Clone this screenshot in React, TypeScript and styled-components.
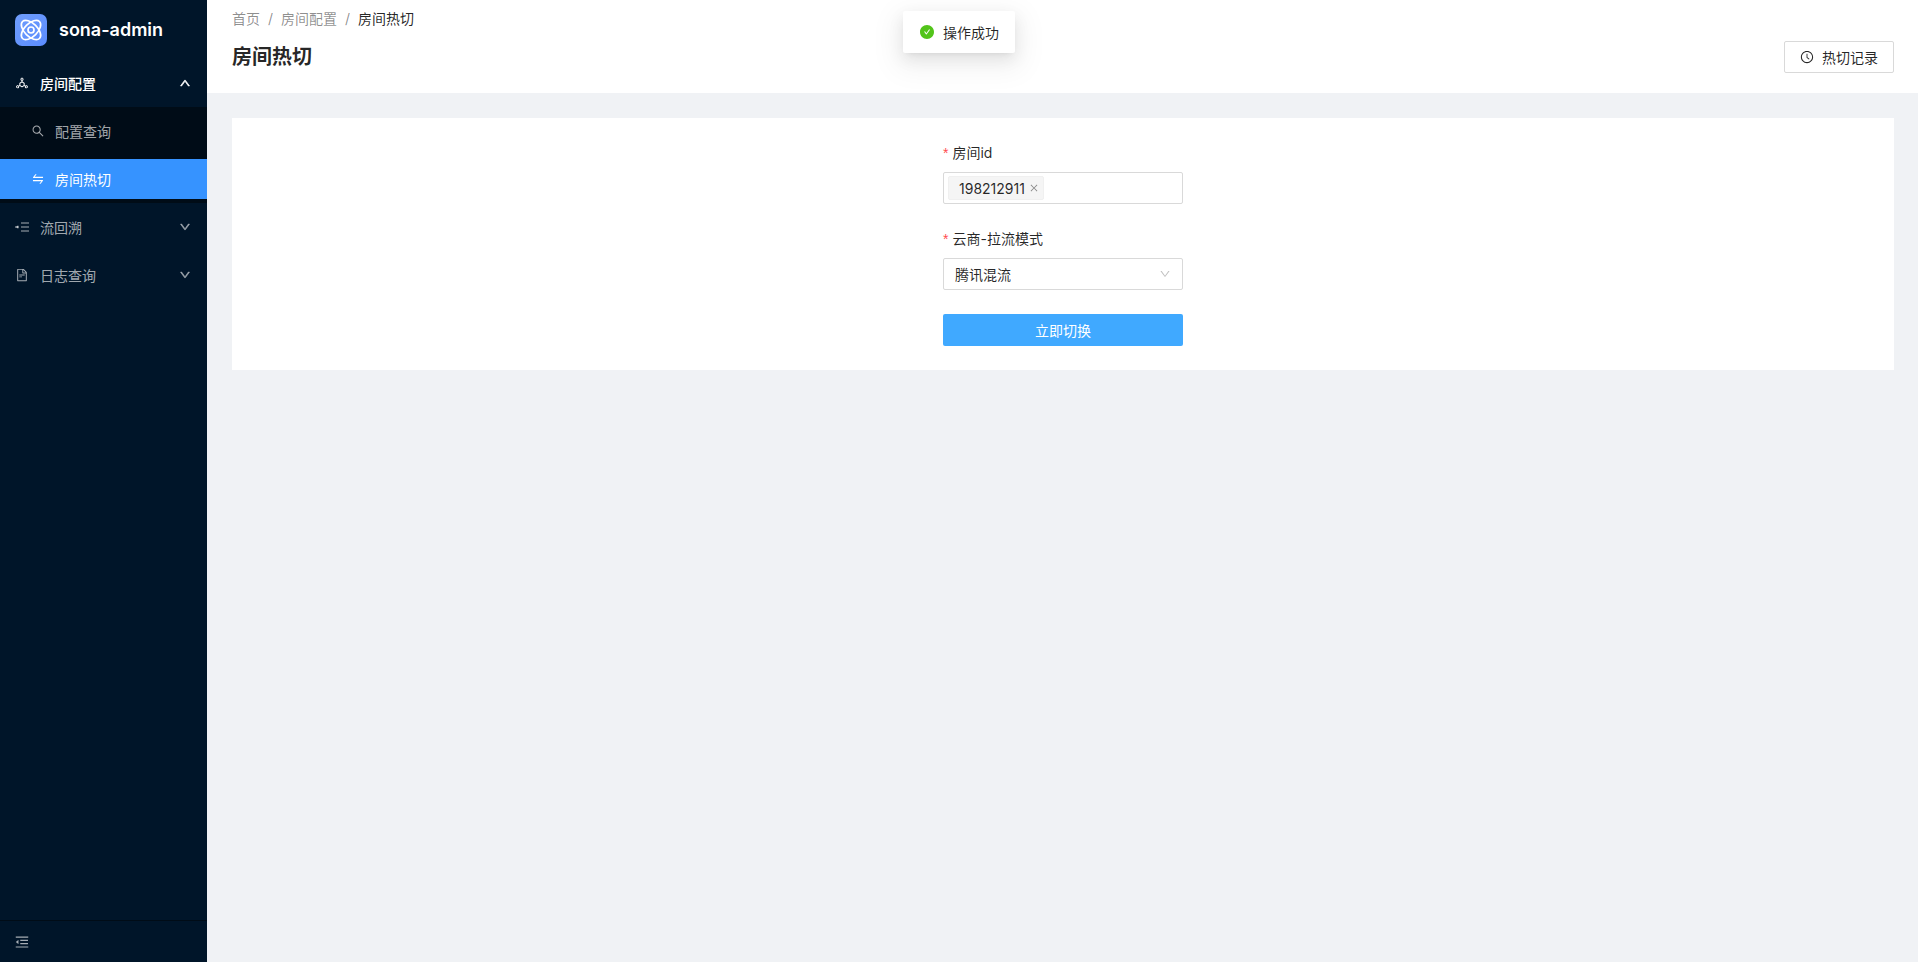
import React from 'react';
import styled, {createGlobalStyle} from 'styled-components';
import {
	AiFillCheckCircle,
	AiOutlineClockCircle,
	AiOutlineClose,
	AiOutlineDeploymentUnit,
	AiOutlineDown,
	AiOutlineFileText,
	AiOutlineMenuFold,
	AiOutlineSearch,
	AiOutlineSwap,
} from 'react-icons/ai';

const FONT = `Inter, "Noto Sans CJK SC", "Noto Sans", sans-serif`;

const GlobalStyle = createGlobalStyle`
	html, body {
		margin: 0;
		height: 100%;
		overflow: hidden;
	}
	* {
		box-sizing: border-box;
	}
	body {
		font-family: ${FONT};
		font-size: 14px;
		color: rgba(0, 0, 0, 0.85);
		background: #f0f2f5;
	}
`;

const Layout = styled.div`
	display: flex;
	width: 1918px;
	height: 962px;
	position: relative;
`;

const Sider = styled.aside`
	width: 207px;
	flex: none;
	background: #001529;
	display: flex;
	flex-direction: column;
`;

const Brand = styled.div`
	display: flex;
	align-items: center;
	gap: 12px;
	height: 55px;
	padding: 4px 0 0 15px;
	color: #fff;
	font-size: 18px;
	font-weight: 600;
`;

const Menu = styled.nav`
	flex: 1;
	padding-top: 8px;
`;

const MenuTitle = styled.div<{$open?: boolean}>`
	display: flex;
	align-items: center;
	height: 40px;
	margin-bottom: 8px;
	padding: 0 16px 0 15px;
	gap: 11px;
	font-size: 14px;
	color: ${(p) => (p.$open ? '#fff' : 'rgba(255, 255, 255, 0.65)')};
	font-weight: ${(p) => (p.$open ? 500 : 400)};
	&:first-child {
		margin-bottom: 4px;
	}
`;

const TitleLabel = styled.span`
	flex: 1;
`;

const SubMenu = styled.div`
	background: #000c17;
	padding: 4px 0;
	margin-bottom: 4px;
`;

const SubItem = styled.div<{$active?: boolean}>`
	display: flex;
	align-items: center;
	gap: 10px;
	height: 40px;
	padding-left: 31px;
	margin-bottom: 8px;
	background: ${(p) => (p.$active ? '#3693ff' : 'transparent')};
	color: ${(p) => (p.$active ? '#fff' : 'rgba(255, 255, 255, 0.65)')};
	&:last-child {
		margin-bottom: 0;
	}
`;

const Arrow = styled(AiOutlineDown)<{$up?: boolean}>`
	font-size: 12px;
	transform: ${(p) => (p.$up ? 'rotate(180deg)' : 'none')};
	stroke: currentColor;
	stroke-width: 60;
	opacity: ${(p) => (p.$up ? 1 : 0.8)};
`;

const SiderFooter = styled.div`
	height: 42px;
	border-top: 1px solid #000c17;
	padding-left: 14px;
	display: flex;
	align-items: center;
	color: rgba(255, 255, 255, 0.65);
	font-size: 16px;
`;

const Main = styled.main`
	flex: 1;
	min-width: 0;
	display: flex;
	flex-direction: column;
`;

const PageHeader = styled.header`
	height: 93px;
	background: #fff;
	padding: 7px 24px 0 25px;
`;

const Breadcrumb = styled.div`
	display: flex;
	align-items: center;
	gap: 8px;
	height: 22px;
	color: rgba(0, 0, 0, 0.45);
`;

const Current = styled.span`
	color: rgba(0, 0, 0, 0.85);
`;

const HeaderRow = styled.div`
	display: flex;
	align-items: center;
	justify-content: space-between;
	margin-top: 12px;
	height: 32px;
`;

const Title = styled.h1`
	margin: 0;
	font-size: 20px;
	font-weight: 600;
	line-height: 32px;
`;

const GhostButton = styled.button`
	display: flex;
	align-items: center;
	justify-content: center;
	gap: 8px;
	width: 110px;
	height: 32px;
	background: #fff;
	border: 1px solid #d9d9d9;
	border-radius: 2px;
	font: inherit;
	color: rgba(0, 0, 0, 0.85);
`;

const Content = styled.section`
	padding: 25px 24px 0 25px;
`;

const Card = styled.div`
	background: #fff;
	padding: 24px 0;
	display: flex;
	justify-content: center;
`;

const Form = styled.form`
	width: 240px;
	margin-right: 0;
	display: flex;
	flex-direction: column;
	gap: 24px;
`;

const Label = styled.label`
	display: block;
	height: 22px;
	line-height: 22px;
	margin-bottom: 8px;
	color: rgba(0, 0, 0, 0.85);
	&::before {
		content: '*';
		color: #ff4d4f;
		margin-right: 4px;
		font-family: SimSun, "Liberation Sans", sans-serif;
	}
`;

const Control = styled.div`
	height: 32px;
	border: 1px solid #d9d9d9;
	border-radius: 2px;
	background: #fff;
	display: flex;
	align-items: center;
`;

const Tag = styled.span`
	display: flex;
	align-items: center;
	gap: 4px;
	height: 24px;
	margin-left: 4px;
	padding: 0 4px 0 10px;
	background: #f5f5f5;
	border: 1px solid #f0f0f0;
	border-radius: 2px;
	color: rgba(0, 0, 0, 0.85);
	svg {
		font-size: 10px;
		color: rgba(0, 0, 0, 0.45);
	}
`;

const SelectValue = styled.span`
	flex: 1;
	padding-left: 11px;
`;

const SelectArrow = styled(AiOutlineDown)`
	font-size: 12px;
	margin-right: 11px;
	color: rgba(0, 0, 0, 0.25);
`;

const Submit = styled.button`
	height: 32px;
	border: none;
	border-radius: 2px;
	background: #40a9ff;
	color: #fff;
	font: inherit;
`;

const Toast = styled.div`
	position: absolute;
	top: 11px;
	left: 903px;
	width: 112px;
	height: 42px;
	display: flex;
	align-items: center;
	gap: 8px;
	padding-left: 16px;
	background: #fff;
	border-radius: 2px;
	box-shadow: 0 3px 6px -4px rgba(0, 0, 0, 0.12), 0 6px 16px 0 rgba(0, 0, 0, 0.08),
		0 9px 28px 8px rgba(0, 0, 0, 0.05);
	svg {
		color: #52c41a;
		font-size: 16px;
	}
`;

const LogoMark = () => (
	<svg width="32" height="32" viewBox="0 0 32 32" fill="none">
		<defs>
			<linearGradient id="logoFill" x1="0" y1="0" x2="1" y2="1">
				<stop offset="0" stopColor="#6f9dfb" />
				<stop offset="1" stopColor="#5b8cff" />
			</linearGradient>
		</defs>
		<rect width="32" height="32" rx="7" fill="url(#logoFill)" />
		<g stroke="#fff" strokeWidth="1.7" fill="none">
			<ellipse cx="16" cy="16" rx="12" ry="6.5" transform="rotate(45 16 16)" />
			<ellipse cx="16" cy="16" rx="12" ry="6.5" transform="rotate(-45 16 16)" />
			<circle cx="16" cy="16" r="3" />
		</g>
	</svg>
);

const TraceIcon = () => (
	<svg width="14" height="14" viewBox="0 0 14 14" fill="none" stroke="currentColor" strokeWidth="1.1">
		<path d="M6 3h8M6 7h8M6 11h8" transform="translate(0 0)" />
		<path d="M0 7h4" />
		<path d="M3.2 5.2v3.6L1 7z" fill="currentColor" stroke="none" />
	</svg>
);

const App: React.FunctionComponent = (): React.ReactElement => {
	return (
		<Layout>
			<GlobalStyle />
			<Sider>
				<Brand>
					<LogoMark />
					sona-admin
				</Brand>
				<Menu>
					<MenuTitle $open>
						<AiOutlineDeploymentUnit size={14} />
						<TitleLabel>房间配置</TitleLabel>
						<Arrow $up />
					</MenuTitle>
					<SubMenu>
						<SubItem>
							<AiOutlineSearch size={14} />
							配置查询
						</SubItem>
						<SubItem $active>
							<AiOutlineSwap size={14} />
							房间热切
						</SubItem>
					</SubMenu>
					<MenuTitle>
						<TraceIcon />
						<TitleLabel>流回溯</TitleLabel>
						<Arrow />
					</MenuTitle>
					<MenuTitle>
						<AiOutlineFileText size={14} />
						<TitleLabel>日志查询</TitleLabel>
						<Arrow />
					</MenuTitle>
				</Menu>
				<SiderFooter>
					<AiOutlineMenuFold />
				</SiderFooter>
			</Sider>
			<Main>
				<PageHeader>
					<Breadcrumb>
						<span>首页</span>
						<span>/</span>
						<span>房间配置</span>
						<span>/</span>
						<Current>房间热切</Current>
					</Breadcrumb>
					<HeaderRow>
						<Title>房间热切</Title>
						<GhostButton>
							<AiOutlineClockCircle size={14} />
							热切记录
						</GhostButton>
					</HeaderRow>
				</PageHeader>
				<Content>
					<Card>
						<Form>
							<div>
								<Label>房间id</Label>
								<Control>
									<Tag>
										198212911
										<AiOutlineClose />
									</Tag>
								</Control>
							</div>
							<div>
								<Label>云商-拉流模式</Label>
								<Control>
									<SelectValue>腾讯混流</SelectValue>
									<SelectArrow />
								</Control>
							</div>
							<Submit type="button">立即切换</Submit>
						</Form>
					</Card>
				</Content>
			</Main>
			<Toast>
				<AiFillCheckCircle />
				操作成功
			</Toast>
		</Layout>
	);
};

export default App;
